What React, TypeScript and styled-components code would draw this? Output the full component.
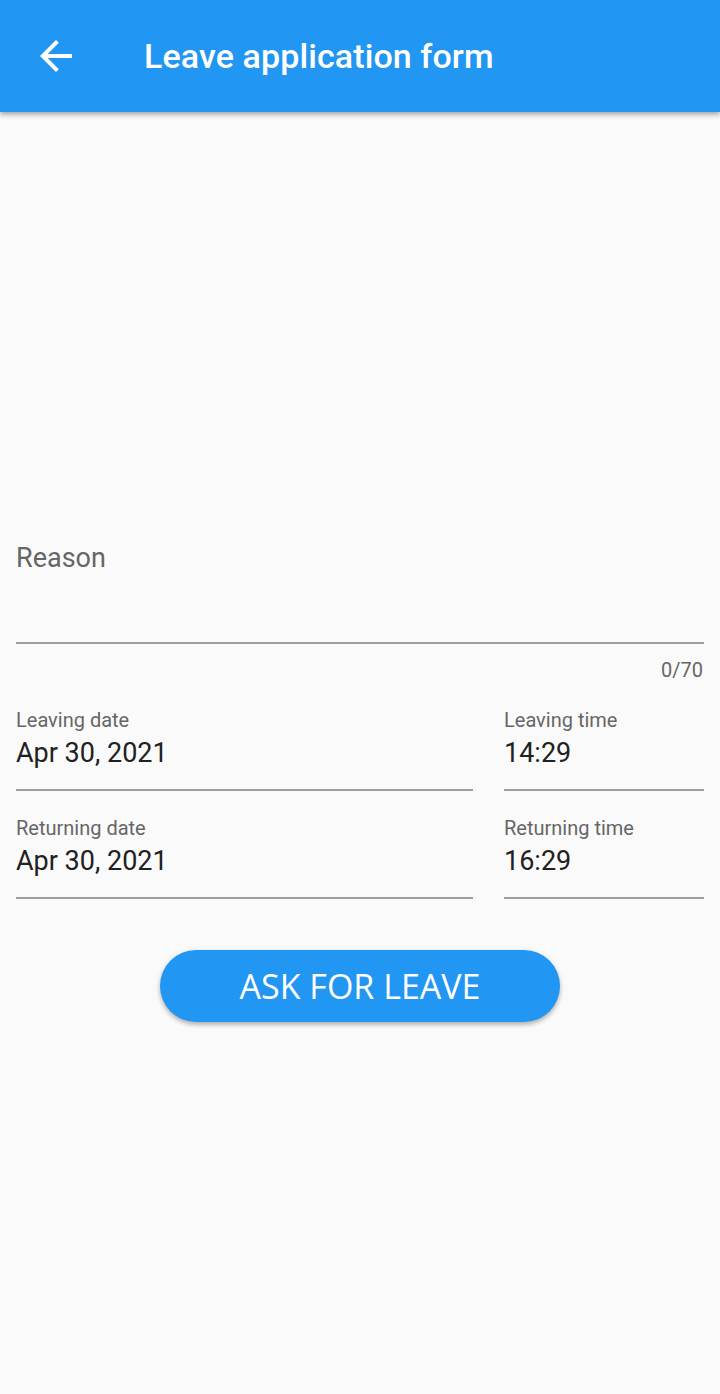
import React from 'react'
import styled, { createGlobalStyle } from 'styled-components'

const GlobalStyle = createGlobalStyle`
  body {
    margin: 0;
    background: #fafafa;
    font-family: Roboto, "Liberation Sans", sans-serif;
  }
`

const Page = styled.div`
  min-height: 1394px;
  background: #fafafa;
  display: flex;
  flex-direction: column;
`

const AppBar = styled.header`
  height: 112px;
  background: #2196f3;
  display: flex;
  align-items: center;
  padding-left: 32px;
  box-shadow: 0 2px 4px rgba(0, 0, 0, 0.2), 0 4px 5px rgba(0, 0, 0, 0.14);
  position: relative;
  z-index: 1;
`

const BackButton = styled.button`
  width: 48px;
  height: 48px;
  padding: 0;
  border: none;
  background: transparent;
  display: flex;
  align-items: center;
  justify-content: center;
  cursor: pointer;
`

const Title = styled.h1`
  margin: 0 0 0 64px;
  color: #fff;
  font-size: 34px;
  font-weight: 500;
  letter-spacing: 0.1px;
`

const Form = styled.form`
  padding: 430px 16px 0;
  display: flex;
  flex-direction: column;
`

const ReasonLabel = styled.label`
  display: block;
  font-size: 27px;
  line-height: 32px;
  color: #666;
`

const ReasonInput = styled.div`
  height: 68px;
  border-bottom: 2px solid #9e9e9e;
`

const Counter = styled.div`
  margin-top: 14px;
  text-align: right;
  font-size: 20px;
  line-height: 24px;
  color: #666;
  padding-right: 1px;
`

const Grid = styled.div`
  margin-top: 26px;
  display: grid;
  grid-template-columns: 1fr 200px;
  column-gap: 31px;
  row-gap: 25px;
`

const Field = styled.div`
  display: flex;
  flex-direction: column;
  border-bottom: 2px solid #9e9e9e;
  padding-bottom: 20px;
`

const FieldLabel = styled.span`
  font-size: 20px;
  line-height: 24px;
  color: #666;
`

const FieldValue = styled.span`
  margin-top: 5px;
  font-size: 27px;
  line-height: 32px;
  color: #212121;
`

const ButtonRow = styled.div`
  margin-top: 51px;
  display: flex;
  justify-content: center;
`

const SubmitButton = styled.button`
  width: 400px;
  height: 72px;
  border: none;
  border-radius: 36px;
  background: #2196f3;
  color: #fff;
  font-family: "Open Sans", "Noto Sans", sans-serif;
  font-size: 34px;
  font-weight: 400;
  box-shadow: 0 3px 4px rgba(0, 0, 0, 0.22), 0 1px 6px rgba(0, 0, 0, 0.1);
  cursor: pointer;
`

const ArrowBack = () => (
  <svg width="48" height="48" viewBox="0 0 24 24" fill="#fff">
    <path d="M20 11H7.83l5.59-5.59L12 4l-8 8 8 8 1.41-1.41L7.83 13H20v-2z" />
  </svg>
)

const fields = [
  { label: 'Leaving date', value: 'Apr 30, 2021' },
  { label: 'Leaving time', value: '14:29' },
  { label: 'Returning date', value: 'Apr 30, 2021' },
  { label: 'Returning time', value: '16:29' },
]

const App = () => {
  return (
    <Page>
      <GlobalStyle />
      <AppBar>
        <BackButton aria-label="Back">
          <ArrowBack />
        </BackButton>
        <Title>Leave application form</Title>
      </AppBar>
      <Form onSubmit={(e) => e.preventDefault()}>
        <ReasonLabel>Reason</ReasonLabel>
        <ReasonInput />
        <Counter>0/70</Counter>
        <Grid>
          {fields.map((f) => (
            <Field key={f.label}>
              <FieldLabel>{f.label}</FieldLabel>
              <FieldValue>{f.value}</FieldValue>
            </Field>
          ))}
        </Grid>
        <ButtonRow>
          <SubmitButton type="submit">ASK FOR LEAVE</SubmitButton>
        </ButtonRow>
      </Form>
    </Page>
  )
}

export default App
